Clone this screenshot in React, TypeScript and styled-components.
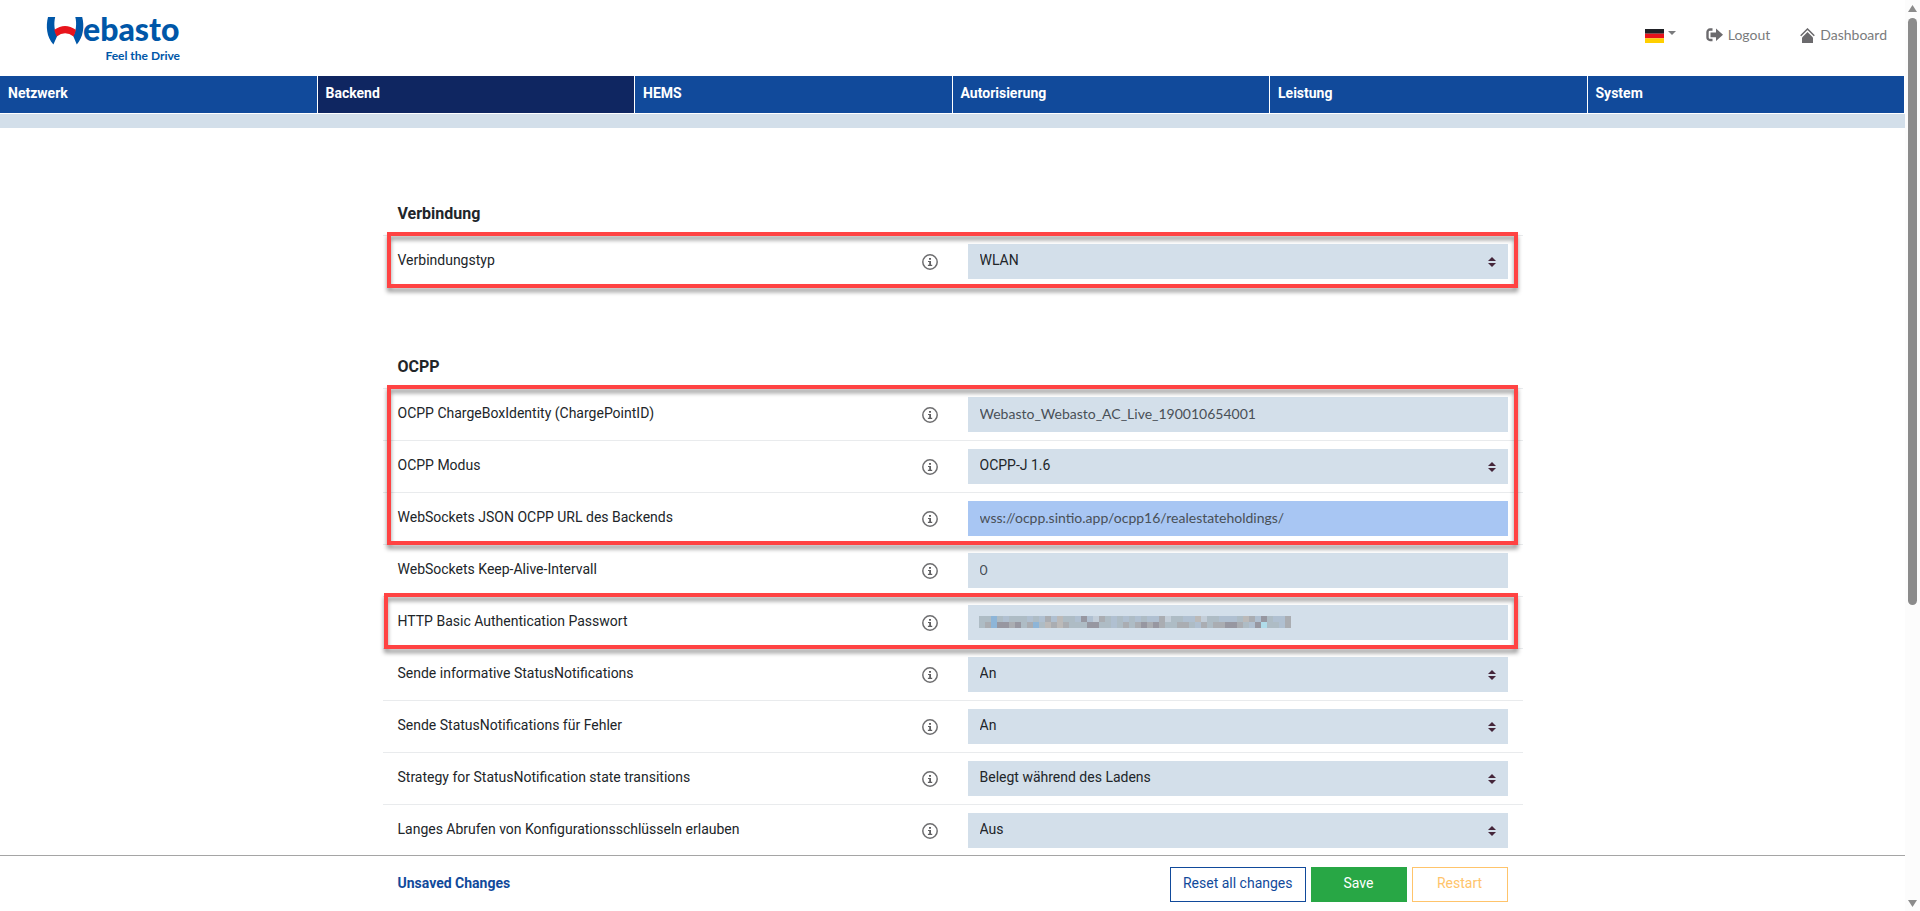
import React from 'react';
import styled, { createGlobalStyle, css } from 'styled-components';

const color = {
  brand: '#114a9b',
  brandDark: '#0f2661',
  logo: '#0057a8',
  field: '#d3dfea',
  fieldFocus: '#a8c6f3',
  line: '#e9ebed',
  text: '#212529',
  muted: '#7a7b7d',
  mark: '#ff4343',
  success: '#28a745',
  warning: '#ffc46b',
};

const geometric = 'Lato, "Liberation Sans", sans-serif';

const GlobalStyle = createGlobalStyle`
  *, *::before, *::after { box-sizing: border-box; }
  body { margin: 0; background: #fff; overflow: hidden; }
  body, button, input, select {
    font-family: Roboto, "Liberation Sans", sans-serif;
    font-size: 14px;
    line-height: 20px;
    color: ${color.text};
  }
`;

const Shell = styled.div`
  display: grid;
  grid-template-columns: minmax(0, 1fr) 15px;
  height: 100vh;
`;

const Page = styled.div`
  display: grid;
  grid-template-rows: auto minmax(0, 1fr) auto;
  min-height: 0;
`;

const Header = styled.header`
  display: flex;
  justify-content: space-between;
  align-items: flex-start;
  height: 76px;
  padding: 0 18px 0 44px;
`;

const LogoLink = styled.a`
  display: block;
  svg { display: block; }
`;

const Tools = styled.div`
  display: flex;
  align-items: center;
  gap: 30px;
  height: 70px;
`;

const LanguageButton = styled.button`
  display: flex;
  gap: 4px;
  padding: 2px 0 0;
  border: 0;
  background: none;
  color: ${color.muted};
`;

const Caret = styled.span`
  margin-top: 2px;
  height: 0;
  border: 4px solid transparent;
  border-top-color: ${color.muted};
  border-bottom: 0;
`;

const ToolLink = styled.a`
  display: flex;
  align-items: center;
  gap: 5px;
  font-family: ${geometric};
  color: ${color.muted};
  text-decoration: none;
`;

const Nav = styled.nav`
  display: grid;
  grid-template-columns: repeat(6, 1fr);
  border-bottom: 1px solid #fff;
`;

const NavLink = styled.a<{ $active?: boolean }>`
  padding: 7px 8px 10px;
  border-right: 1px solid #fff;
  background: ${(p) => (p.$active ? color.brandDark : color.brand)};
  color: #fff;
  font-weight: 700;
  text-decoration: none;
`;

const Band = styled.div`
  height: 14px;
  background: ${color.field};
`;

const Main = styled.main`
  display: flex;
  flex-direction: column;
  gap: 68px;
  padding-top: 74px;
  overflow: hidden;
`;

const Section = styled.section`
  width: 100%;
  max-width: 1140px;
  margin: 0 auto;
`;

const Heading = styled.h2`
  margin: 0 0 9px;
  padding: 0 15px;
  font-size: 16px;
  line-height: 24px;
  font-weight: 700;
`;

const Highlight = styled.div<{ $wide?: boolean }>`
  position: relative;
  &::after {
    content: '';
    position: absolute;
    z-index: 1;
    inset: -3px 5px -1px ${(p) => (p.$wide ? 1 : 4)}px;
    border: 4px solid ${color.mark};
    filter: drop-shadow(0 4px 2px rgba(0, 0, 0, 0.4));
    pointer-events: none;
  }
`;

const Row = styled.div`
  display: grid;
  grid-template-columns: 1fr 1fr;
  gap: 30px;
  padding: 8px 15px;
  border-top: 1px solid ${color.line};
`;

const LabelCell = styled.div`
  display: flex;
  justify-content: space-between;
  align-items: center;
  label { padding-bottom: 3px; }
`;

const InfoButton = styled.button`
  display: flex;
  padding: 0;
  border: 0;
  background: none;
`;

const Control = styled.div`
  position: relative;
`;

const fieldStyle = css`
  display: block;
  width: 100%;
  height: 35px;
  margin: 0;
  border: 0;
  border-radius: 0;
  outline: 0;
  background: ${color.field};
`;

const TextInput = styled.input<{ $focused?: boolean }>`
  ${fieldStyle}
  padding: 6px 12px 8px;
  font-family: ${geometric};
  color: #495057;
  ${(p) => p.$focused && css`background: ${color.fieldFocus};`}
`;

const SelectBox = styled.select`
  ${fieldStyle}
  appearance: none;
  padding: 6px 30px 9px 12px;
`;

const SelectArrows = styled.svg`
  position: absolute;
  top: 13px;
  right: 12px;
  pointer-events: none;
`;

const Redaction = styled.svg`
  position: absolute;
  top: 11px;
  left: 11px;
  pointer-events: none;
`;

const Footer = styled.footer`
  position: relative;
  z-index: 2;
  padding: 11px 0 9px;
  border-top: 1px solid #a5a5a5;
  background: #fff;
`;

const FooterInner = styled.div`
  display: flex;
  justify-content: space-between;
  align-items: center;
  width: 100%;
  max-width: 1140px;
  margin: 0 auto;
  padding: 0 15px;
`;

const Unsaved = styled.strong`
  padding-bottom: 3px;
  color: ${color.brand};
`;

const Actions = styled.div`
  display: flex;
  gap: 5px;
`;

const tones = {
  outline: css`background: #fff; border-color: ${color.brand}; color: ${color.brand};`,
  success: css`background: ${color.success}; border-color: ${color.success}; color: #fff;`,
  warning: css`background: #fff; border-color: ${color.warning}; color: ${color.warning};`,
};

const ActionButton = styled.button<{ $tone: keyof typeof tones }>`
  min-width: 96px;
  height: 35px;
  padding: 5px 12px 8px;
  border: 1px solid;
  ${(p) => tones[p.$tone]}
`;

const Scrollbar = styled.div`
  display: flex;
  flex-direction: column;
  align-items: center;
  gap: 6px;
  padding: 5px 0 4px;
  background: #fcfcfc;
`;

const ScrollTrack = styled.div`
  flex: 1;
  width: 9px;
`;

const ScrollThumb = styled.div`
  width: 9px;
  height: 67%;
  border-radius: 5px;
  background: #8b8b8b;
`;

const Logo = () => (
  <svg width="144" height="70" viewBox="44 0 144 70" role="img" aria-label="Webasto Feel the Drive">
    <path d="M48 17H55.200C53.500 24 54.500 31 57.200 36L53.400 44.500C46.500 37 45.700 26 48 17z" fill={color.logo} />
    <path d="M75.300 17H82.200C84.500 26 83.500 37 76.800 44.500L73.200 36C76 31 77 24 75.300 17z" fill={color.logo} />
    <path d="M54.300 29.800Q65 22 75.900 29.800Q75.200 33.500 73.600 36.500Q65 29.800 56.800 36.500Q55 33.500 54.300 29.800z" fill="#e8141c" />
    <text x="83" y="41" fontFamily="Lato, sans-serif" fontWeight="900" fontSize="32" fill={color.logo}>ebasto</text>
    <text x="180" y="60" textAnchor="end" fontFamily="Lato, sans-serif" fontWeight="700" fontSize="12" fill={color.logo}>Feel the Drive</text>
  </svg>
);

const Flag = () => (
  <svg width="19" height="14" viewBox="0 0 19 14" role="img" aria-label="Deutsch">
    <path d="M0 0h19v4.700H0z" fill="#202126" />
    <path d="M0 4.700h19v4.600H0z" fill="#e8131b" />
    <path d="M0 9.300h19V14H0z" fill="#ffcf00" />
  </svg>
);

const LogoutIcon = () => (
  <svg width="17" height="14" viewBox="0 0 17 14" aria-hidden="true">
    <path d="M6.500 1.500H4a2.500 2.500 0 0 0-2.500 2.500v5.500A2.500 2.500 0 0 0 4 12h2.500" fill="none" stroke="#6b6a6d" strokeWidth="2.400" />
    <path d="M4.500 4.500H10V.5l7 6.300-7 6.200V9.200H4.500z" fill="#6b6a6d" />
  </svg>
);

const HomeIcon = () => (
  <svg width="15" height="15" viewBox="0 0 15 15" aria-hidden="true">
    <path d="M.7 7.800 7.500 1l6.800 6.800" fill="none" stroke="#6b6a6d" strokeWidth="1.500" />
    <path d="M7.500 3.900 13 9.400V15H2V9.400z" fill="#6b6a6d" />
  </svg>
);

const InfoIcon = () => (
  <svg width="16" height="16" viewBox="0 0 16 16" aria-hidden="true">
    <circle cx="8" cy="8" r="7.200" fill="none" stroke="#6e6e70" strokeWidth="1.500" />
    <path d="M7 4h2v1.700H7zM6 6.900h3v3.900h1.200V12H5.900v-1.200h1.300V8.100H6z" fill="#5f5f61" />
  </svg>
);

const shade: Record<string, string> = {
  a: '#aebcc5', b: '#b0c0d1', g: '#aaadb2', d: '#9797a1', l: '#c3ced9', k: '#8db5d8', p: '#bcbab9', c: '#b0dcea',
};
const mosaic = [
  'aakabaaababgbpaabdblgababababbglaabbplaabbbapgbdabbg',
  'agkddgdagkapgpgaaaddaabagagdgdgaaggabgaggddgabdcaabgdgga',
].map((line) => line.slice(0, 52));

const Mosaic = () => (
  <Redaction width="312" height="12" viewBox="0 0 312 12" aria-hidden="true" shapeRendering="crispEdges">
    {mosaic.map((line, y) =>
      line.split('').map((s, x) => (
        <rect key={`${x}-${y}`} x={x * 6} y={y * 6} width="6" height="6" fill={shade[s]} />
      )),
    )}
  </Redaction>
);

type FieldProps = {
  id: string;
  label: string;
  value?: string;
  kind?: 'select' | 'text' | 'password';
  focused?: boolean;
};

const Field = ({ id, label, value = '', kind = 'text', focused }: FieldProps) => (
  <Row>
    <LabelCell>
      <label htmlFor={id}>{label}</label>
      <InfoButton type="button" aria-label={`Info: ${label}`}><InfoIcon /></InfoButton>
    </LabelCell>
    <Control>
      {kind === 'select' ? (
        <>
          <SelectBox id={id} defaultValue={value}><option>{value}</option></SelectBox>
          <SelectArrows width="8" height="10" viewBox="0 0 8 10" aria-hidden="true">
            <path d="M0 4l4-4 4 4zM0 6h8l-4 4z" fill="#45263a" />
          </SelectArrows>
        </>
      ) : (
        <TextInput id={id} type={kind} defaultValue={value} $focused={focused} />
      )}
      {kind === 'password' && <Mosaic />}
    </Control>
  </Row>
);

const tabs = ['Netzwerk', 'Backend', 'HEMS', 'Autorisierung', 'Leistung', 'System'];

export default function App() {
  return (
    <Shell>
      <GlobalStyle />
      <Page>
        <div>
          <Header>
            <LogoLink href="#"><Logo /></LogoLink>
            <Tools>
              <LanguageButton type="button"><Flag /><Caret /></LanguageButton>
              <ToolLink href="#logout"><LogoutIcon />Logout</ToolLink>
              <ToolLink href="#dashboard"><HomeIcon />Dashboard</ToolLink>
            </Tools>
          </Header>
          <Nav>
            {tabs.map((t) => (
              <NavLink key={t} href={`#${t}`} $active={t === 'Backend'}>{t}</NavLink>
            ))}
          </Nav>
          <Band />
        </div>
        <Main>
          <Section>
            <Heading>Verbindung</Heading>
            <Highlight>
              <Field id="type" label="Verbindungstyp" kind="select" value="WLAN" />
            </Highlight>
          </Section>
          <Section>
            <Heading>OCPP</Heading>
            <Highlight>
              <Field id="identity" label="OCPP ChargeBoxIdentity (ChargePointID)" value="Webasto_Webasto_AC_Live_190010654001" />
              <Field id="mode" label="OCPP Modus" kind="select" value="OCPP-J 1.6" />
              <Field id="url" label="WebSockets JSON OCPP URL des Backends" value="wss://ocpp.sintio.app/ocpp16/realestateholdings/" focused />
            </Highlight>
            <Field id="keepalive" label="WebSockets Keep-Alive-Intervall" value="0" />
            <Highlight $wide>
              <Field id="password" label="HTTP Basic Authentication Passwort" kind="password" />
            </Highlight>
            <Field id="info" label="Sende informative StatusNotifications" kind="select" value="An" />
            <Field id="errors" label="Sende StatusNotifications für Fehler" kind="select" value="An" />
            <Field id="strategy" label="Strategy for StatusNotification state transitions" kind="select" value="Belegt während des Ladens" />
            <Field id="longkeys" label="Langes Abrufen von Konfigurationsschlüsseln erlauben" kind="select" value="Aus" />
          </Section>
        </Main>
        <Footer>
          <FooterInner>
            <Unsaved>Unsaved Changes</Unsaved>
            <Actions>
              <ActionButton type="button" $tone="outline">Reset all changes</ActionButton>
              <ActionButton type="button" $tone="success">Save</ActionButton>
              <ActionButton type="button" $tone="warning">Restart</ActionButton>
            </Actions>
          </FooterInner>
        </Footer>
      </Page>
      <Scrollbar aria-hidden="true">
        <svg width="9" height="7" viewBox="0 0 9 7"><path d="M4.500 0 9 7H0z" fill="#8b8b8b" /></svg>
        <ScrollTrack><ScrollThumb /></ScrollTrack>
        <svg width="9" height="7" viewBox="0 0 9 7"><path d="M4.500 7 9 0H0z" fill="#8b8b8b" /></svg>
      </Scrollbar>
    </Shell>
  );
}
